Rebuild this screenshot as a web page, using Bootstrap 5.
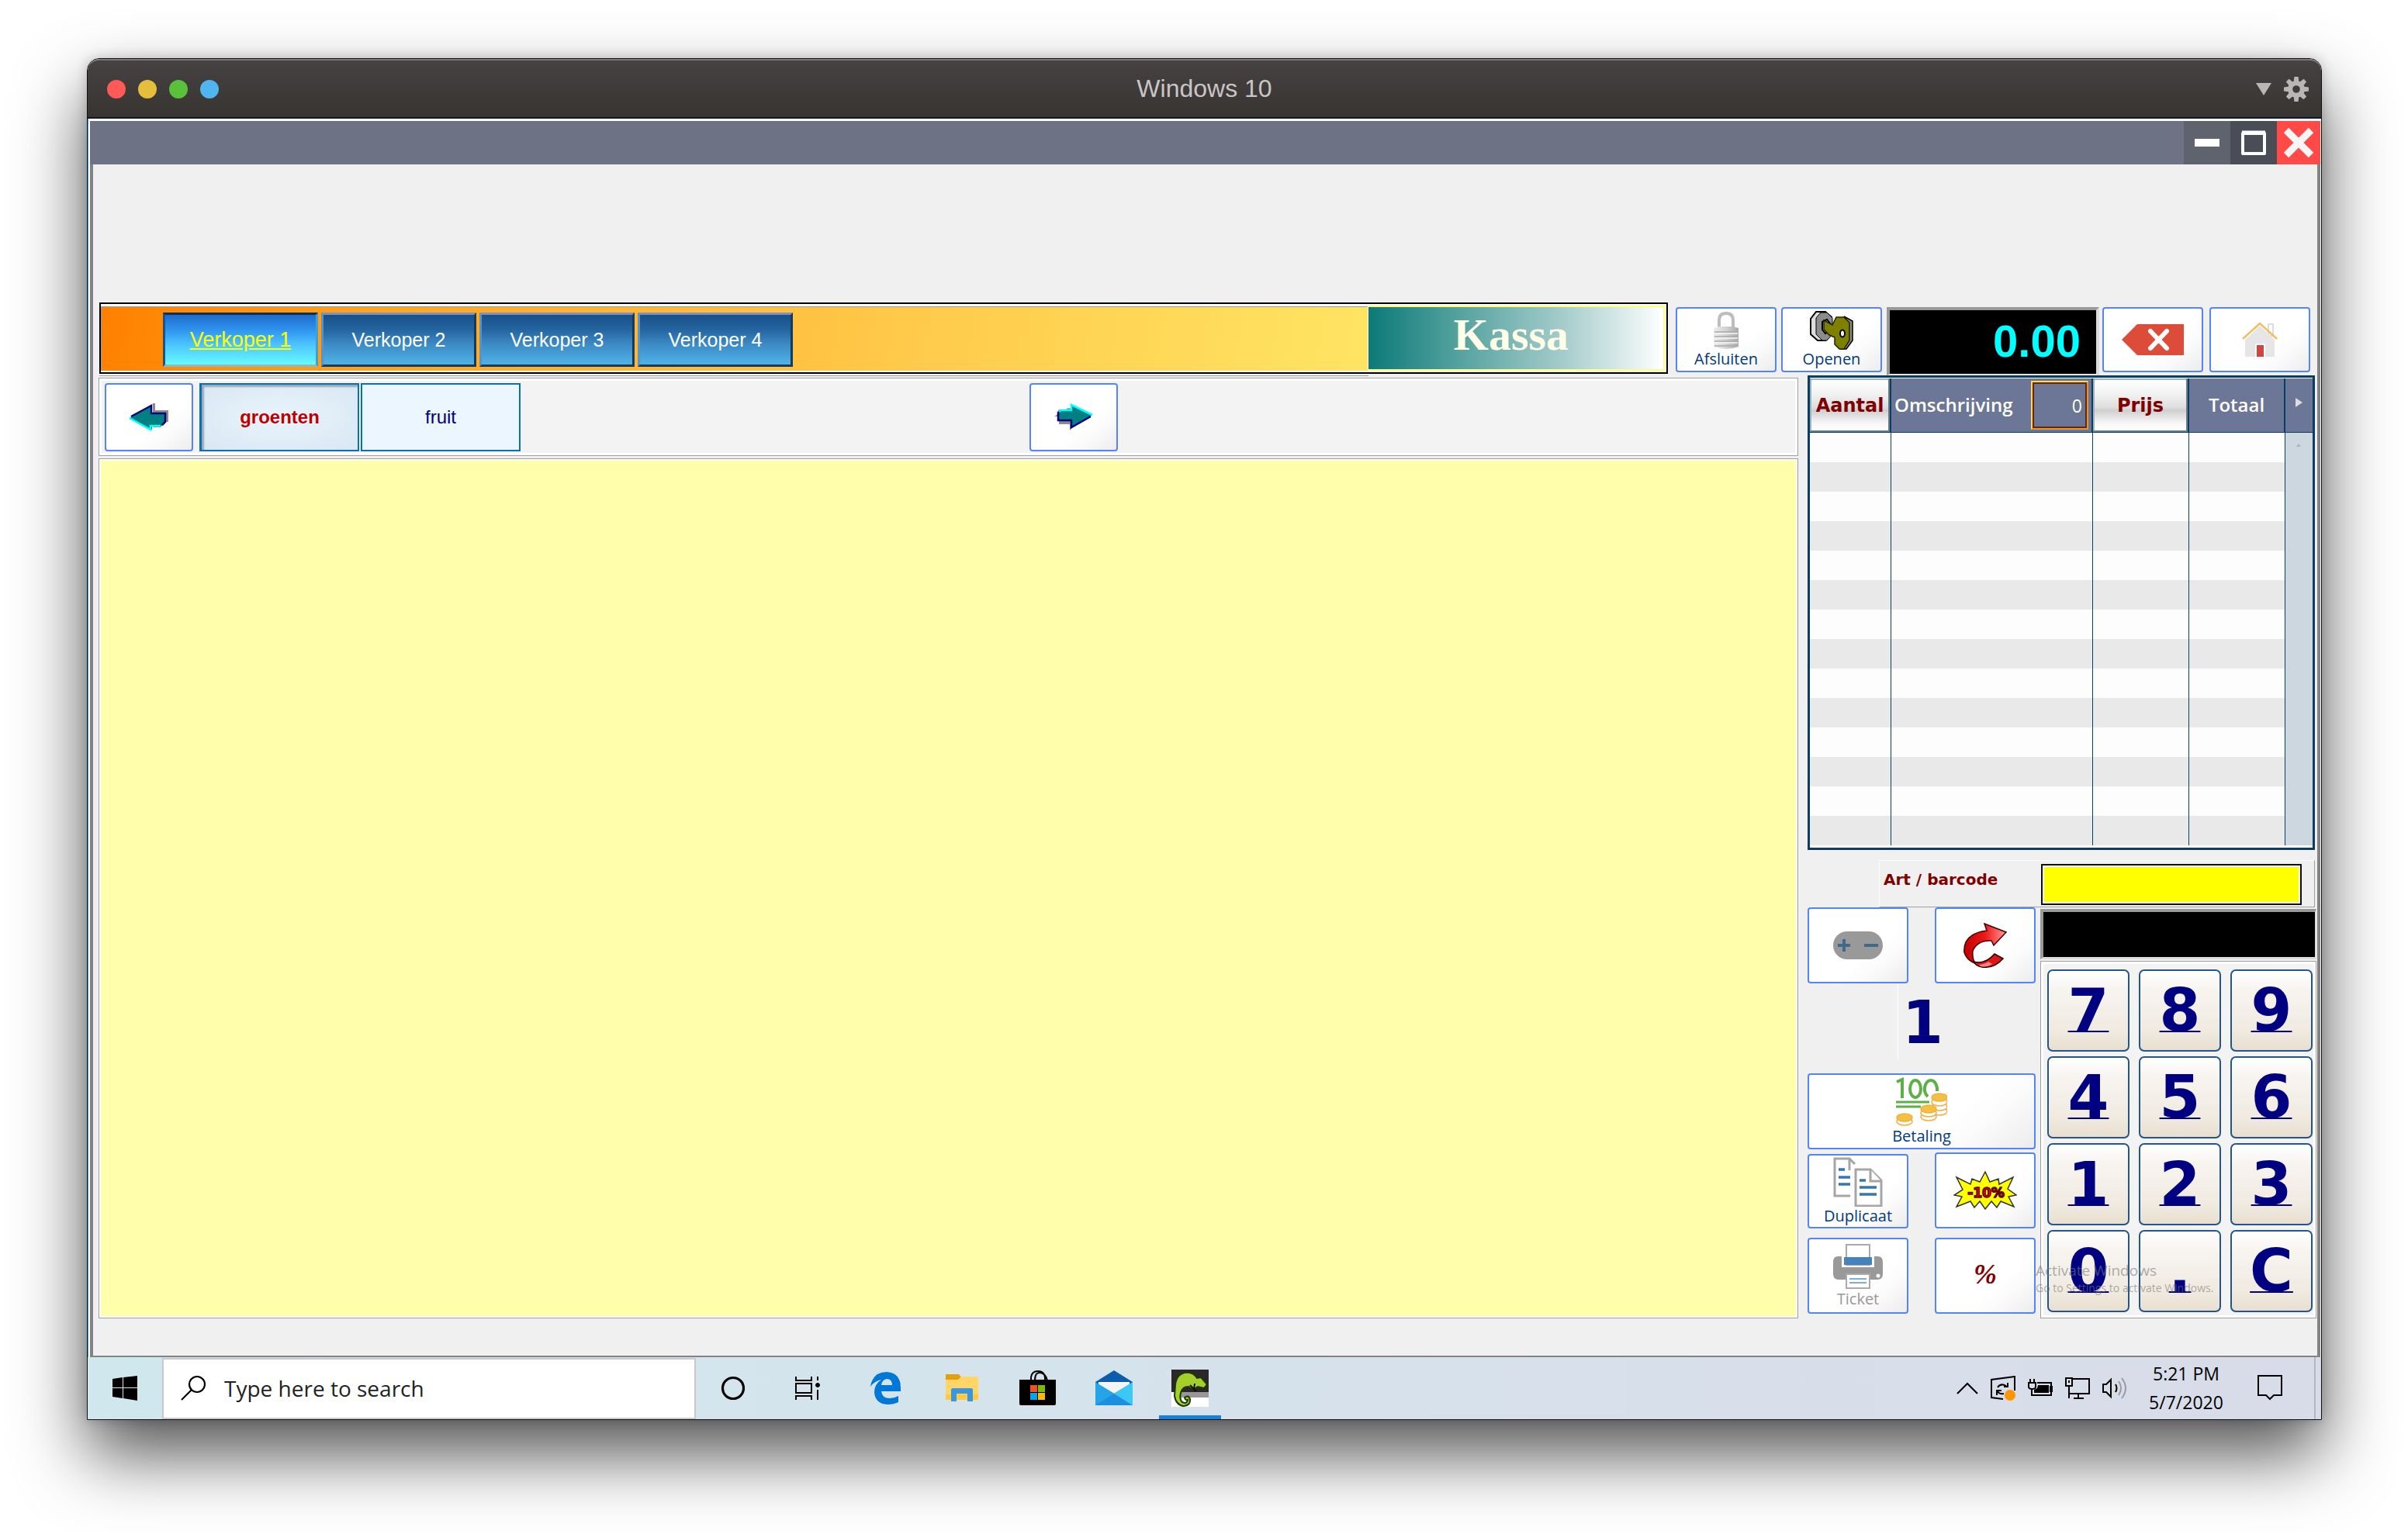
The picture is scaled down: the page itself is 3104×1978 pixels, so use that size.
<!DOCTYPE html>
<html lang="nl">
<head>
<meta charset="utf-8">
<meta name="viewport" content="width=device-width, initial-scale=1">
<title>Windows 10</title>
<link href="https://cdn.jsdelivr.net/npm/bootstrap@5.3.0/dist/css/bootstrap.min.css" rel="stylesheet">
<style>
body{background:#fff;font-family:"Open Sans","Noto Sans",sans-serif;padding:75px 111px 146px 112px;color:#000;line-height:1.2}
button{font-family:inherit}
svg{display:block;flex:none}
.vm{border:1px solid #111;border-radius:16px 16px 0 0;box-shadow:0 44px 90px rgba(0,0,0,.68),0 0 16px rgba(0,0,0,.2);background:#fff}
.vm-bar{height:77px;background:linear-gradient(#464241,#383432);border-radius:15px 15px 0 0;border-top:2px solid #7c7877;border-bottom:2px solid #0a1a2c;padding:0 16px}
.vm-side{width:300px}
.vm-dots{padding-left:9px}
.dot{width:24px;height:24px;border-radius:50%;border:0;padding:0}
.dot-r{background:#ff5a57}.dot-y{background:#e5bf3c}.dot-g{background:#59c13a}.dot-b{background:#4fb6f0}
.vm-title{font:32px/40px "Liberation Sans",sans-serif;color:#c9c5c4;padding-bottom:2px}
.vm-screen{padding:3px 1px 0 2px;border-left:1px solid #29a8e8}
.app-bar{height:56px;background:#6d7385}
.win-btn{width:60px;height:56px;border:0;padding:0;display:flex;align-items:center;justify-content:center;background:#5f636d}
.win-max{background:#4a4c56}
.win-close{width:56px;background:#ff4a48}
.app-main{border:solid #838383;border-width:0 4px 2px;background:#f0f0f0;padding:178px 1px 48px 7px}
.top-line{padding:0 8px 0 1px;height:94px}
.top-tools{padding-top:6px;margin-left:10px}
.seller-box{height:92px;border:solid #000;border-width:2px 0 2px 2px;background:#fff;padding:3px 1px 2px 0;box-shadow:0 2px #fff,0 3px #999}
.seller-in{height:83px;background:linear-gradient(100deg,#ff8000,#ffa41f 22%,#ffcb4c 65%,#ffe463);border:solid #a09a90;border-width:1px 0 0 1px;padding:7px 0 0 79px;gap:4px}
.seller{width:200px;height:70px;padding:0;font:25px/30px "Liberation Sans",sans-serif;color:#fff;border:3px solid;border-color:#7d93bd #173a5c #173a5c #5b93c4;background:linear-gradient(#195089,#2465a0 30%,#3d8bc6 60%,#4fb3e8)}
.seller.on{font-size:27px;color:#ff0;text-decoration:underline;border-color:#0b2f55 #3f9fd4 #8db9bd #14578f;background:linear-gradient(#1f6ccb,#2f93ee 30%,#4cc4ff 60%,#66fbff)}
.kassa-box{width:386px;height:92px;border:solid #000;border-width:2px 2px 2px 0;padding:2px 2px 2px 0;background:#fff}
.kassa-in{height:84px;border:solid #ffff7d;border-width:2px 2px 2px 0;background:linear-gradient(90deg,#0c7a78,#5aa5a2 33%,#a4cccb 66%,#fff);font:bold 58px/72px "Liberation Serif",serif;color:#ffffe8;text-align:center;padding-right:12px}
.tool{border:2px solid #5584f3;border-radius:4px;background:linear-gradient(140deg,#fff 60%,#fbfbfb 75%,#ececec);padding:0;display:flex;flex-direction:column;align-items:center;justify-content:center;color:#003a80;font-size:20px;line-height:24px}
.tool.small-t{width:130px;height:84px}
.tool.big-t{width:130px;height:98px}
.tool.dup-t{height:96px}
.tool.wide-t{width:100%;height:98px}
.tool:disabled{color:#999}
.total{width:274px;height:88px;margin-right:4px;border:solid;border-width:4px 4px 2px 4px;border-color:#999 #dcdcdc #e4e4e4 #999;background:#000;color:#0ff;font:bold 58px/80px "Liberation Sans",sans-serif;text-align:right;padding-right:20px}
.gap-r{margin-right:6px}
.main-line{gap:12px}
.left-col{padding-top:3px;gap:3px}
.tab-panel{border:1px solid #a0a0a0;background:#f3f3f3;box-shadow:inset 0 0 0 3px #fff;padding:6px 7px 5px}
.tab-arrow{width:114px;height:88px}
.group-btn{width:206px;height:88px;margin-right:2px;font:24px/30px "Liberation Sans",sans-serif;color:#000080;border:2px solid #0a70b4;background:#ecf6fe;padding:0}
.group-btn.on{color:#c00000;font-weight:bold;border-width:2px 2px 2px 3px;background:radial-gradient(#e9f4fc,#d9e7f3);box-shadow:inset 3px 3px 2px #9aa9b6}
.to-right{margin-left:654px}
.goods{border:1px solid #a0a0a0;background:#ffffab;box-shadow:inset 0 0 0 2px #fff}
.right-col{width:656px}
.lines{width:654px;border:3px solid #0b3c62;background:#fdfdfd;padding:1px 0 3px}
.lines table{width:100%;table-layout:fixed;border-collapse:separate;border-spacing:0}
.lines th{height:70px;padding:0;background:#6c7696;color:#fff;font-size:24px;font-weight:600;border-right:2px solid #0b3c62;border-bottom:1px solid #0b3c62;vertical-align:middle}
.lines td{height:38px;padding:0;border-right:1px solid #0b3c62}
.lines tbody tr:nth-child(even) td{background:#e9e9e9}
.lines tbody td.scroll-cell{background:#cdd7df;border:0;vertical-align:top;padding:14px 0 0 14px}
.head-btn{width:100%;height:69px;padding:0;font:bold 24px/30px "DejaVu Sans",sans-serif;color:#800000;border:2px solid;border-color:#9db3bf #6b7d85 #6b7d85 #9db3bf;border-radius:3px;background:linear-gradient(#fff,#f0f0f0 30%,#dedede 55%,#cfcfcf 60%,#f6f6f6 85%,#fff)}
.count{width:74px;height:63px;background:transparent;border:2px solid #ffd94a;outline:2px solid #6a2408;outline-offset:-4px;border-right-color:#e09a30;border-bottom-color:#e09a30;color:#ffffe8;font-size:23px;text-align:right;padding:0 6px 0 0}
.w-a{width:105px}.w-b{width:260px}.w-c{width:124px}.w-e{width:35px}
.barcode{margin:13px 2px 0 92px;height:61px;border:1px solid #fdfdfd;border-right-color:#a0a0a0;border-bottom-color:#a0a0a0;padding:4px 16px 3px 5px}
.barcode label{font:bold 20px/24px "DejaVu Sans",sans-serif;color:#800000;padding-top:8px}
.barcode input{width:336px;height:53px;border:2px solid #111;background:#ff0;box-shadow:inset 0 0 0 2px #fff;border-radius:0;padding:0 4px;color:#000080;font-size:26px}
.pads{gap:6px}
.func{width:294px}
.qty{height:116px;font:bold 76px/100px "DejaVu Sans",sans-serif;color:#000080;text-align:left;padding-left:116px}
.qty div{border-left:1px solid #fff;padding-left:5px;height:98px;line-height:102px}
.percent{font:italic bold 36px/40px "Liberation Serif",serif;color:#800000;padding-bottom:4px}
.keys-side{width:356px;padding-top:2px}
.msg{height:65px;background:#000;border:solid;border-width:4px 2px 3px 4px;border-color:#999 #dcdcdc #dcdcdc #999;margin-bottom:2px}
.keypad{display:grid;grid-template-columns:repeat(3,106px);column-gap:12px;row-gap:6px;border:1px solid #a0a0a0;background:#f3f3f3;box-shadow:inset 0 0 0 3px #fff;padding:10px 0 7px 8px}
.numkey{height:106px;padding:0;font:bold 76px/96px "DejaVu Sans",sans-serif;color:#000080;border:2px solid #25568a;border-radius:7px;background:linear-gradient(#fff,#f7f4ef 25%,#f0eae0 75%,#e8dfd0);text-decoration:underline;text-decoration-thickness:2px;text-underline-offset:0;text-decoration-skip-ink:none}
.activate{position:absolute;left:294px;bottom:28px;color:rgba(120,120,120,.6);font-size:14px;line-height:22px;white-space:nowrap;pointer-events:none}
.activate b{font-weight:400;font-size:19px;display:block;line-height:24px}
.taskbar{height:80px;background:linear-gradient(90deg,#d0e7ee,#d5e3ec 45%,#d7dfea 70%,#d8dce9);margin:0 -1px 0 -3px}
.tb-btn{width:96px;height:80px;border:0;padding:0;background:transparent;display:flex;align-items:center;justify-content:center}
.tb-app{width:98px}
.tb-app.on{box-shadow:inset 0 -5px #1680dc;width:80px;margin:0 9px}
.find{width:688px;height:79px;border:2px solid #c9c9cd;background:#fff;padding-left:22px;gap:24px}
.find input{border:0;background:transparent;font-size:28px;line-height:36px;color:#222;padding:0;outline:0}
.find input::placeholder{color:#222;opacity:1}
.tray{gap:16px}
.clock{font-size:23px;line-height:37px;width:104px;text-align:center;margin:0 40px 0 24px}
.show-desk{width:9px;height:80px;border-left:2px solid #b4b8c6;margin-left:41px}
</style>
<script src="https://cdn.jsdelivr.net/npm/bootstrap@5.3.0/dist/js/bootstrap.bundle.min.js"></script>
</head>
<body>
<div class="vm">
  <header class="vm-bar d-flex align-items-center justify-content-between">
    <div class="vm-side vm-dots d-flex gap-3">
      <button class="dot dot-r" aria-label="Close"></button>
      <button class="dot dot-y" aria-label="Minimise"></button>
      <button class="dot dot-g" aria-label="Zoom"></button>
      <button class="dot dot-b" aria-label="Coherence"></button>
    </div>
    <div class="vm-title">Windows 10</div>
    <div class="vm-side d-flex justify-content-end align-items-center gap-3">
      <svg width="20" height="16"><path d="M0 0H20L10 16Z" fill="#bab6b5"/></svg>
      <svg width="32" height="32" viewBox="-16 -16 32 32"><g fill="#bab6b5"><path id="tooth" d="M-2.6-16H2.6L3.4-9H-3.4Z"/><use href="#tooth" transform="rotate(45)"/><use href="#tooth" transform="rotate(90)"/><use href="#tooth" transform="rotate(135)"/><use href="#tooth" transform="rotate(180)"/><use href="#tooth" transform="rotate(225)"/><use href="#tooth" transform="rotate(270)"/><use href="#tooth" transform="rotate(315)"/></g><circle r="7.8" fill="none" stroke="#bab6b5" stroke-width="6"/></svg>
    </div>
  </header>

  <div class="vm-screen">
    <div class="app-bar d-flex justify-content-end">
      <button class="win-btn" aria-label="Minimaliseren"><svg width="32" height="10"><path d="M0 0H32V10H0Z" fill="#fff"/></svg></button>
      <button class="win-btn win-max" aria-label="Maximaliseren"><svg width="32" height="32"><path d="M2 4H30V30H2Z" fill="none" stroke="#fff" stroke-width="4" stroke-linejoin="round"/><path d="M1 3H31" stroke="#fff" stroke-width="5"/></svg></button>
      <button class="win-btn win-close" aria-label="Sluiten"><svg width="42" height="42"><path d="M5 5L37 37M37 5L5 37" stroke="#f6f6f6" stroke-width="9"/></svg></button>
    </div>

    <main class="app-main">
      <div class="top-line d-flex align-items-start">
        <div class="seller-box flex-fill">
          <div class="seller-in d-flex align-items-start">
            <button class="seller on">Verkoper 1</button>
            <button class="seller">Verkoper 2</button>
            <button class="seller">Verkoper 3</button>
            <button class="seller">Verkoper 4</button>
          </div>
        </div>
        <div class="kassa-box"><div class="kassa-in">Kassa</div></div>
        <div class="top-tools d-flex align-items-start">
          <button class="tool small-t gap-r"><svg width="34" height="50" viewBox="0 0 34 50"><defs><linearGradient id="lk"><stop offset="0" stop-color="#eee"/><stop offset=".5" stop-color="#d2d2d2"/><stop offset="1" stop-color="#aaa"/></linearGradient></defs><path d="M8 24V12Q8 3 17 3T26 12V24" fill="none" stroke="#bdbdbd" stroke-width="4"/><path d="M1 22L8 20H26L33 22V46Q17 52 1 46Z" fill="url(#lk)"/><path d="M2 27H32M2 33H32M2 39H32M2 45H32" stroke="#aaa" stroke-width="1.5"/><path d="M2 29H32M2 35H32M2 41H32" stroke="#f6f6f6" stroke-width="1.5"/></svg>Afsluiten</button>
          <button class="tool small-t gap-r"><svg width="56" height="50" viewBox="0 0 56 50"><path d="M8 1H20L28 8V30L20 38H10L1 30V10Z" fill="#dcdcdc" stroke="#000" stroke-width="2"/><path d="M14 2H22L29 9V30L22 38H16L8 30V9Z" fill="#8c8c8c" stroke="#000" stroke-width="1"/><path d="M16 14L22 11L26 16V24L20 29L16 24Z" fill="#fff" stroke="#000" stroke-width="2"/><path d="M44 7L55 13V38L47 49H40L50 38V16Z" fill="#8c8c8c" stroke="#000" stroke-width="1.5"/><path d="M18 12L29 18L34 8H44L51 15V38L44 49H38L32 43V34L25 31L18 24Z" fill="#808000" stroke="#222200" stroke-width="1.5"/><ellipse cx="42" cy="29" rx="3" ry="4.500" fill="#fff" stroke="#000" stroke-width="2"/></svg>Openen</button>
          <div class="total">0.00</div>
          <button class="tool small-t me-2" aria-label="Wissen"><svg width="80" height="40"><path d="M0 20L20 0H80V40H20Z" fill="#dd4b39"/><path d="M37 9L58 31M58 9L37 31" stroke="#fff" stroke-width="6" stroke-linecap="round"/></svg></button>
          <button class="tool small-t" aria-label="Home"><svg width="46" height="46"><path d="M34 3H40V18H34Z" fill="#fff" stroke="#ddd" stroke-width="2"/><path d="M4 23L23 5L42 23V45H4Z" fill="#e6e6e6"/><path d="M17 28H30V45H17Z" fill="#fff"/><path d="M19 30H28V45H19Z" fill="#cf4640"/><path d="M1 22L23 2L45 22" fill="none" stroke="#f3bf5e" stroke-width="2.5"/></svg></button>
        </div>
      </div>

      <div class="main-line d-flex">
        <section class="left-col flex-fill d-flex flex-column">
          <nav class="tab-panel d-flex" aria-label="Groepen">
            <button class="tool tab-arrow me-2" aria-label="Vorige"><svg width="50" height="36" viewBox="0 0 50 36"><path d="M30 0H33V9H50V24H46L40 31H30Z" fill="#8c8c8c"/><path d="M0 19L28 3V13H46V24L42 29H29V34Z" fill="#008080"/><path d="M2 17L28 3V13H46V24L42 28" fill="none" stroke="#000080" stroke-width="2.5"/><path d="M0 19L27 34V29H40" fill="none" stroke="#0ff" stroke-width="2.5"/></svg></button>
            <button class="group-btn on">groenten</button>
            <button class="group-btn">fruit</button>
            <button class="tool tab-arrow to-right" aria-label="Volgende"><svg width="50" height="36" viewBox="0 0 50 36"><path d="M0 17H6V27H20V35L26 28V8L18 6L8 12Z" fill="#8c8c8c"/><path d="M49 15L22 32V22H5V12L9 9H22V2Z" fill="#008080"/><path d="M47 17L22 31V22H5V12L8 9" fill="none" stroke="#000080" stroke-width="2.5"/><path d="M6 11L9 9H22V2L49 15" fill="none" stroke="#0ff" stroke-width="2.5"/></svg></button>
          </nav>
          <div class="goods flex-fill"></div>
        </section>

        <section class="right-col">
          <div class="lines">
            <table>
              <colgroup><col class="w-a"><col class="w-b"><col class="w-c"><col class="w-c"><col class="w-e"></colgroup>
              <thead><tr>
                <th scope="col"><button class="head-btn d-block">Aantal</button></th>
                <th scope="col"><div class="d-flex align-items-center justify-content-between ps-1 pe-1"><label for="cnt">Omschrijving</label><input id="cnt" class="count" value="0"></div></th>
                <th scope="col"><button class="head-btn d-block">Prijs</button></th>
                <th scope="col" class="text-center">Totaal</th>
                <th scope="col" class="border-end-0"><svg width="9" height="12" class="mx-auto mb-2"><path d="M0 0L9 6L0 12Z" fill="#ddd"/></svg></th>
              </tr></thead>
              <tbody>
                <tr><td></td><td></td><td></td><td></td><td class="scroll-cell" rowspan="14"><svg width="6" height="4"><path d="M0 4L3 0L6 4Z" fill="#aab4bd"/></svg></td></tr>
                <tr><td></td><td></td><td></td><td></td></tr>
                <tr><td></td><td></td><td></td><td></td></tr>
                <tr><td></td><td></td><td></td><td></td></tr>
                <tr><td></td><td></td><td></td><td></td></tr>
                <tr><td></td><td></td><td></td><td></td></tr>
                <tr><td></td><td></td><td></td><td></td></tr>
                <tr><td></td><td></td><td></td><td></td></tr>
                <tr><td></td><td></td><td></td><td></td></tr>
                <tr><td></td><td></td><td></td><td></td></tr>
                <tr><td></td><td></td><td></td><td></td></tr>
                <tr><td></td><td></td><td></td><td></td></tr>
                <tr><td></td><td></td><td></td><td></td></tr>
                <tr><td></td><td></td><td></td><td></td></tr>
              </tbody>
            </table>
          </div>

          <div class="barcode d-flex justify-content-between align-items-start">
            <label for="code">Art / barcode</label>
            <input id="code" type="text">
          </div>

          <div class="pads d-flex position-relative">
            <div class="func">
              <div class="d-flex justify-content-between">
                <button class="tool big-t" disabled aria-label="Plus min"><svg width="64" height="36"><rect width="64" height="36" rx="18" fill="#999"/><path d="M6 18H22M14 10V26M40 18H58" stroke="#3f6a8c" stroke-width="4"/></svg></button>
                <button class="tool big-t" aria-label="Terug"><svg width="56" height="58" viewBox="0 0 56 58"><defs><linearGradient id="rd"><stop offset="0" stop-color="#c00000"/><stop offset=".5" stop-color="#f01818"/><stop offset="1" stop-color="#ff9a9a"/></linearGradient></defs><path d="M27 1L55 12L39 29L36 23Q18 22 12 36Q11 46 15 52Q4 48 1 38Q-1 14 30 10Z" fill="url(#rd)" stroke="#400" stroke-width="1.5"/><path d="M13 50Q28 54 40 40L51 46Q40 59 24 57Q16 56 13 50Z" fill="#e01515" stroke="#200" stroke-width="1.5"/><path d="M20 54Q28 53 32 50L37 53Q30 58 22 56Z" fill="#ff8080"/></svg></button>
              </div>
              <div class="qty"><div>1</div></div>
              <button class="tool wide-t"><svg width="66" height="64" viewBox="0 0 66 64"><g fill="none" stroke="#5cb046" stroke-width="4"><path d="M1 6L8 3V27"/><ellipse cx="25" cy="15" rx="7" ry="11"/><path d="M41 25Q36 20 37 13Q39 4 45 4T53 14V18"/></g><path d="M0 32H43M0 38H32" stroke="#5cb046" stroke-width="3"/><g stroke="#f0b14a" stroke-width="1.5" fill="#fff"><ellipse cx="56" cy="44" rx="10" ry="5"/><ellipse cx="56" cy="38" rx="10" ry="5"/><ellipse cx="56" cy="32" rx="10" ry="5"/><ellipse cx="56" cy="26" rx="10" ry="5" fill="#f4c13e"/><ellipse cx="42" cy="51" rx="10" ry="5"/><ellipse cx="42" cy="46" rx="10" ry="5"/><ellipse cx="42" cy="41" rx="10" ry="5" fill="#f4c13e"/><ellipse cx="11" cy="57" rx="10" ry="5"/><ellipse cx="11" cy="52" rx="10" ry="5" fill="#f4c13e"/></g></svg>Betaling</button>
              <div class="d-flex justify-content-between align-items-end pt-1">
                <button class="tool big-t dup-t"><svg width="64" height="64" viewBox="0 0 64 64"><g fill="#fff" stroke="#a6a6a6" stroke-width="3"><path d="M22 50H2V2H21V17M21 2L28 9" fill="none"/><path d="M29 16H48L62 30V63H29Z"/><path d="M48 16V31H62"/></g><path d="M7 16H15M7 26H22M7 35H22M34 30H42M34 39H56M34 48H56" stroke="#3576b5" stroke-width="3.5"/></svg>Duplicaat</button>
                <button class="tool big-t" aria-label="-10%"><svg width="82" height="50" viewBox="0 0 82 50"><path d="M41 1L47 14L58 10L59 17L77 8L70 23L81 31L71 33L78 46L61 39L56 47L49 39L41 49L34 39L27 47L22 39L4 46L11 33L1 31L12 24L4 8L22 17L24 10L34 14Z" fill="#ff0" stroke="#333" stroke-width="1.5"/><g text-anchor="middle" font-family="DejaVu Sans" font-weight="bold" font-size="17"><text x="42" y="34" fill="#f00" stroke="#600000" stroke-width="1.5">-10%</text></g></svg></button>
              </div>
              <div class="d-flex justify-content-between mt-2 pt-1">
                <button class="tool big-t" disabled><svg width="64" height="60" viewBox="0 0 64 60"><path d="M6 17H58Q64 17 64 25V40Q64 47 57 47H7Q0 47 0 40V25Q0 17 6 17Z" fill="#999"/><path d="M11 17H53V31H11Z" fill="#fff"/><path d="M17 2H47V28H17Z" fill="#fff" stroke="#aaa" stroke-width="2"/><path d="M14 18H50V28H14Z" fill="#4483bd"/><path d="M17 40H47V58H17Z" fill="#fff" stroke="#aaa" stroke-width="2"/><path d="M21 46H43M21 51H43" stroke="#7faed6" stroke-width="2"/><circle cx="58" cy="42" r="2.5" fill="#fff"/></svg>Ticket</button>
                <button class="tool big-t percent">%</button>
              </div>
            </div>
            <div class="keys-side">
              <div class="msg"></div>
              <div class="keypad">
                <button class="numkey">7</button><button class="numkey">8</button><button class="numkey">9</button>
                <button class="numkey">4</button><button class="numkey">5</button><button class="numkey">6</button>
                <button class="numkey">1</button><button class="numkey">2</button><button class="numkey">3</button>
                <button class="numkey">0</button><button class="numkey">.</button><button class="numkey">C</button>
              </div>
            </div>
            <div class="activate"><b>Activate Windows</b>Go to Settings to activate Windows.</div>
          </div>
        </section>
      </div>
    </main>

    <footer class="taskbar d-flex align-items-center">
      <button class="tb-btn" aria-label="Start"><svg width="32" height="32"><path d="M0 4L13 2V15H0ZM14 2L32 0V15H14ZM0 16H13V29L0 27ZM14 16H32V32L14 29Z"/></svg></button>
      <div class="find d-flex align-items-center">
        <svg width="32" height="32" fill="none" stroke="#000" stroke-width="2.2"><circle cx="21" cy="11" r="10"/><path d="M14 18L1 31"/></svg>
        <input type="search" class="flex-fill" placeholder="Type here to search" aria-label="Type here to search">
      </div>
      <button class="tb-btn" aria-label="Cortana"><svg width="32" height="32"><circle cx="16" cy="16" r="13.5" fill="none" stroke="#000" stroke-width="3.2"/></svg></button>
      <button class="tb-btn me-1" aria-label="Task View"><svg width="32" height="30" fill="none" stroke="#000" stroke-width="2"><path d="M1 0V5H21V0M1 9H21V21H1ZM1 30V25H21V30M29 0V5M29 17V30"/><circle cx="29" cy="11" r="2.5" fill="#000" stroke-width="1"/></svg></button>
      <button class="tb-btn tb-app" aria-label="Edge"><svg width="40" height="42" viewBox="0 0 40 42"><path d="M0 19Q3 0 21 0Q39 1 39 20V25H14Q15 34 25 34Q31 34 36 31V39Q30 42 22 42Q6 41 5 26Q5 16 14 10Q5 12 0 19ZM14 17H28Q28 9 21 9Q15 10 14 17Z" fill="#0078d7" fill-rule="evenodd"/></svg></button>
      <button class="tb-btn tb-app" aria-label="Explorer"><svg width="42" height="36"><path d="M0 0H17L21 5H42V33H0Z" fill="#e0a010"/><path d="M0 7H16L20 3H40Q42 3 42 5V33H0Z" fill="#ffd567"/><path d="M0 26H42V31Q42 33 40 33H0Z" fill="#ffcb3d"/><path d="M7 35V20Q7 18 9 18H33Q35 18 35 20V35H28V25H14V35Z" fill="#3a96dd"/></svg></button>
      <button class="tb-btn tb-app" aria-label="Store"><svg width="48" height="46"><path d="M15 13V9Q16 1 24 1T33 9V13M20 13Q20 2 27 3T36 13" fill="none" stroke="#000" stroke-width="2"/><path d="M0 12H47V43Q47 45 45 45H2Q0 45 0 43Z"/><path d="M14 19H23V28H14Z" fill="#f25022"/><path d="M24 19H33V28H24Z" fill="#7fba00"/><path d="M14 29H23V38H14Z" fill="#00a4ef"/><path d="M24 29H33V38H24Z" fill="#ffb900"/></svg></button>
      <button class="tb-btn tb-app" aria-label="Mail"><svg width="48" height="46"><path d="M0 15L24 0L48 15V30H0Z" fill="#0b5cab"/><path d="M4 15H44V18L24 30L4 18Z" fill="#f4f4f4"/><path d="M0 15L24 30L48 45H0Z" fill="#25a4e8"/><path d="M48 15L24 30L48 45Z" fill="#3cc8f4"/><path d="M0 45L24 30L48 45Z" fill="#1d8fe0"/></svg></button>
      <button class="tb-btn tb-app on" aria-label="Kassa"><svg width="48" height="48"><path d="M0 0H48V48H0Z" fill="#fff"/><path d="M0 0H48V29H0Z" fill="#2a2829"/><path d="M10 29H48V36H10Z" fill="#9a9698"/><path d="M5 20Q6 7 17 4Q28 2 33 11L38 10L46 19L42 24L34 22L28 26L22 22Q14 22 12 30Q10 38 14 42Q20 45 21 39Q18 40 17 36Q22 32 24 38Q25 46 16 47Q6 46 4 34Z" fill="#a5cf2b" stroke="#1b3a00" stroke-width="2"/><path d="M24 20L32 28M30 18L29 26" stroke="#111" stroke-width="2"/></svg></button>
      <div class="tray d-flex align-items-center ms-auto">
        <svg width="28" height="16" fill="none" stroke="#000" stroke-width="2"><path d="M1 15L14 2L27 15"/></svg>
        <svg width="32" height="32" fill="none" stroke="#000" stroke-width="2"><path d="M31 19V1L1 5V28L16 30"/><path d="M9 15Q13 9 20 13M22 9V14H17M17 23Q11 24 9 20M8 25V19H14"/><circle cx="25" cy="25" r="7" fill="#ff9500" stroke="none"/></svg>
        <svg width="32" height="24" fill="none" stroke="#000" stroke-width="2"><path d="M3 0V5M8 0V5M1 5H10V10Q10 13 5.500 13T1 10ZM5 13V21H30V5H12"/><path d="M13 8H27V18H8V14L12 12Z" fill="#000" stroke="none"/><path d="M30 9V17" stroke-width="4"/></svg>
        <svg width="32" height="28" fill="none" stroke="#000" stroke-width="2"><path d="M1 1H9V11H1ZM9 2H31V21H5M5 11V27M17 21V26M11 27H24M5 4V7"/></svg>
        <svg width="32" height="30" fill="none" stroke="#000" stroke-width="2"><path d="M1 10H5L11 4V26L5 20H1Z"/><path d="M17 10Q20 15 17 20"/><path d="M21 6Q27 15 21 24M25 2Q35 15 25 28" stroke="#999da6"/></svg>
      </div>
      <div class="clock">5:21 PM<br>5/7/2020</div>
      <svg width="32" height="34" fill="none" stroke="#000" stroke-width="2"><path d="M1 1H31V26H21L16 31L11 26H1Z"/></svg>
      <div class="show-desk"></div>
    </footer>
  </div>
</div>
</body>
</html>
